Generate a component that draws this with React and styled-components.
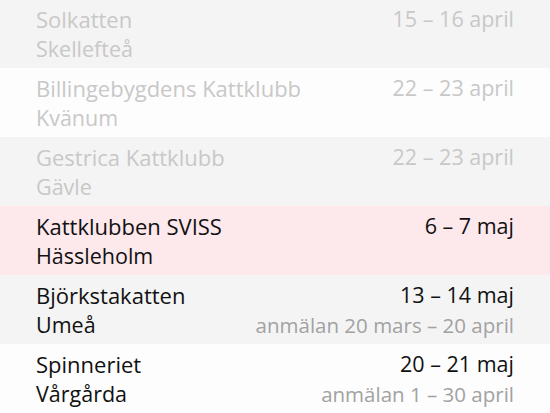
import React from "react";
import styled, { createGlobalStyle } from "styled-components";

const GlobalStyle = createGlobalStyle`
  html, body {
    margin: 0;
    padding: 0;
    background: #fdfdfd;
  }
  body {
    font-family: "Open Sans", "Noto Sans", sans-serif;
    -webkit-font-smoothing: antialiased;
  }
`;

const List = styled.div`
  width: 550px;
  height: 413px;
  overflow: hidden;
`;

const Rows = styled.div`
  margin-top: -1px;
`;

const rowBg = {
  gray: "#f4f4f4",
  white: "#fdfdfd",
  pink: "#fde8ec",
};

const Row = styled.div`
  display: grid;
  grid-template-columns: 1fr auto;
  grid-template-rows: 30px 30px;
  align-items: center;
  height: 69px;
  box-sizing: border-box;
  padding: 5px 36px 4px;
  background: ${(props) => rowBg[props.tone]};
  font-size: 21.5px;
  line-height: 30px;
`;

const Title = styled.span`
  font-size: 22px;
  color: ${(props) => (props.past ? "#c8c8c8" : "#111111")};
  white-space: nowrap;
`;

const Place = styled.span`
  color: ${(props) => (props.past ? "#c8c8c8" : "#111111")};
  white-space: nowrap;
`;

const Dates = styled.span`
  text-align: right;
  color: ${(props) => (props.past ? "#c8c8c8" : "#111111")};
  white-space: nowrap;
`;

const Signup = styled.span`
  font-size: 20.5px;
  text-align: right;
  color: #a2a2a2;
  white-space: nowrap;
`;

const shows = [
  { name: "Solkatten", city: "Skellefteå", dates: "15 – 16 april", past: true, tone: "gray" },
  { name: "Billingebygdens Kattklubb", city: "Kvänum", dates: "22 – 23 april", past: true, tone: "white" },
  { name: "Gestrica Kattklubb", city: "Gävle", dates: "22 – 23 april", past: true, tone: "gray" },
  { name: "Kattklubben SVISS", city: "Hässleholm", dates: "6 – 7 maj", tone: "pink" },
  { name: "Björkstakatten", city: "Umeå", dates: "13 – 14 maj", signup: "anmälan 20 mars – 20 april", tone: "gray" },
  { name: "Spinneriet", city: "Vårgårda", dates: "20 – 21 maj", signup: "anmälan 1 – 30 april", tone: "white" },
];

const App = () => (
  <>
    <GlobalStyle />
    <List>
      <Rows>
        {shows.map((s) => (
          <Row key={s.name} tone={s.tone}>
            <Title past={s.past}>{s.name}</Title>
            <Dates past={s.past}>{s.dates}</Dates>
            <Place past={s.past}>{s.city}</Place>
            <Signup>{s.signup || ""}</Signup>
          </Row>
        ))}
      </Rows>
    </List>
  </>
);

export default App;
